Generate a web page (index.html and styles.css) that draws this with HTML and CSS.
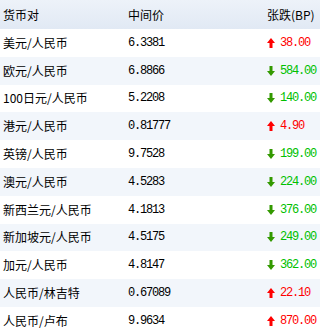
FILE: index.html
```html
<!DOCTYPE html>
<html>
<head>
<meta charset="utf-8">
<link rel="stylesheet" href="styles.css">
</head>
<body>
<div class="table">
  <div class="row head"><span class="c1">货币对</span><span class="c2">中间价</span><span class="c3">张跌(BP)</span></div>
  <div class="row"><span class="c1">美元/人民币</span><span class="c2 num">6.3381</span><span class="c3 up"><svg class="arr" viewBox="0 0 8 10"><polygon points="4,0 8,5 5.5,5 5.5,10 2.5,10 2.5,5 0,5"/></svg><span class="num">38.00</span></span></div>
  <div class="row alt"><span class="c1">欧元/人民币</span><span class="c2 num">6.8866</span><span class="c3 down"><svg class="arr" viewBox="0 0 8 10"><polygon points="4,10 8,5 5.5,5 5.5,0 2.5,0 2.5,5 0,5"/></svg><span class="num">584.00</span></span></div>
  <div class="row"><span class="c1">100日元/人民币</span><span class="c2 num">5.2208</span><span class="c3 down"><svg class="arr" viewBox="0 0 8 10"><polygon points="4,10 8,5 5.5,5 5.5,0 2.5,0 2.5,5 0,5"/></svg><span class="num">140.00</span></span></div>
  <div class="row alt"><span class="c1">港元/人民币</span><span class="c2 num">0.81777</span><span class="c3 up"><svg class="arr" viewBox="0 0 8 10"><polygon points="4,0 8,5 5.5,5 5.5,10 2.5,10 2.5,5 0,5"/></svg><span class="num">4.90</span></span></div>
  <div class="row"><span class="c1">英镑/人民币</span><span class="c2 num">9.7528</span><span class="c3 down"><svg class="arr" viewBox="0 0 8 10"><polygon points="4,10 8,5 5.5,5 5.5,0 2.5,0 2.5,5 0,5"/></svg><span class="num">199.00</span></span></div>
  <div class="row alt"><span class="c1">澳元/人民币</span><span class="c2 num">4.5283</span><span class="c3 down"><svg class="arr" viewBox="0 0 8 10"><polygon points="4,10 8,5 5.5,5 5.5,0 2.5,0 2.5,5 0,5"/></svg><span class="num">224.00</span></span></div>
  <div class="row"><span class="c1">新西兰元/人民币</span><span class="c2 num">4.1813</span><span class="c3 down"><svg class="arr" viewBox="0 0 8 10"><polygon points="4,10 8,5 5.5,5 5.5,0 2.5,0 2.5,5 0,5"/></svg><span class="num">376.00</span></span></div>
  <div class="row alt"><span class="c1">新加坡元/人民币</span><span class="c2 num">4.5175</span><span class="c3 down"><svg class="arr" viewBox="0 0 8 10"><polygon points="4,10 8,5 5.5,5 5.5,0 2.5,0 2.5,5 0,5"/></svg><span class="num">249.00</span></span></div>
  <div class="row"><span class="c1">加元/人民币</span><span class="c2 num">4.8147</span><span class="c3 down"><svg class="arr" viewBox="0 0 8 10"><polygon points="4,10 8,5 5.5,5 5.5,0 2.5,0 2.5,5 0,5"/></svg><span class="num">362.00</span></span></div>
  <div class="row alt"><span class="c1">人民币/林吉特</span><span class="c2 num">0.67089</span><span class="c3 up"><svg class="arr" viewBox="0 0 8 10"><polygon points="4,0 8,5 5.5,5 5.5,10 2.5,10 2.5,5 0,5"/></svg><span class="num">22.10</span></span></div>
  <div class="row"><span class="c1">人民币/卢布</span><span class="c2 num">9.9634</span><span class="c3 up"><svg class="arr" viewBox="0 0 8 10"><polygon points="4,0 8,5 5.5,5 5.5,10 2.5,10 2.5,5 0,5"/></svg><span class="num">870.00</span></span></div>
</div>
</body>
</html>
```
FILE: styles.css
```css
html, body {
  margin: 0;
  padding: 0;
  background: #ffffff;
}
body {
  font-family: "Noto Sans CJK SC", "Noto Sans", sans-serif;
  font-size: 12px;
  color: #000;
  overflow: hidden;
}
.table {
  width: 320px;
}
.row {
  display: grid;
  grid-template-columns: 125px 139px 1fr;
  align-items: center;
  height: 27.8px;
  padding-left: 3px;
  background: #ffffff;
}
.row.alt {
  background: #f2f6fb;
}
.row.head {
  height: 29px;
  background: linear-gradient(#edf2f9, #e1e9f4);
}
.c1, .c2, .c3 {
  white-space: nowrap;
  line-height: 14px;
}
.num {
  font-family: "Liberation Mono", "DejaVu Sans Mono", monospace;
  font-size: 12px;
  letter-spacing: -1.2px;
}
.c3 {
  display: flex;
  align-items: center;
  gap: 5px;
}
.arr {
  width: 8px;
  height: 10px;
  display: block;
}
.up {
  color: #ff0000;
}
.up .arr {
  fill: #ff0000;
}
.down {
  color: #00c000;
}
.down .arr {
  fill: #339900;
}
```
